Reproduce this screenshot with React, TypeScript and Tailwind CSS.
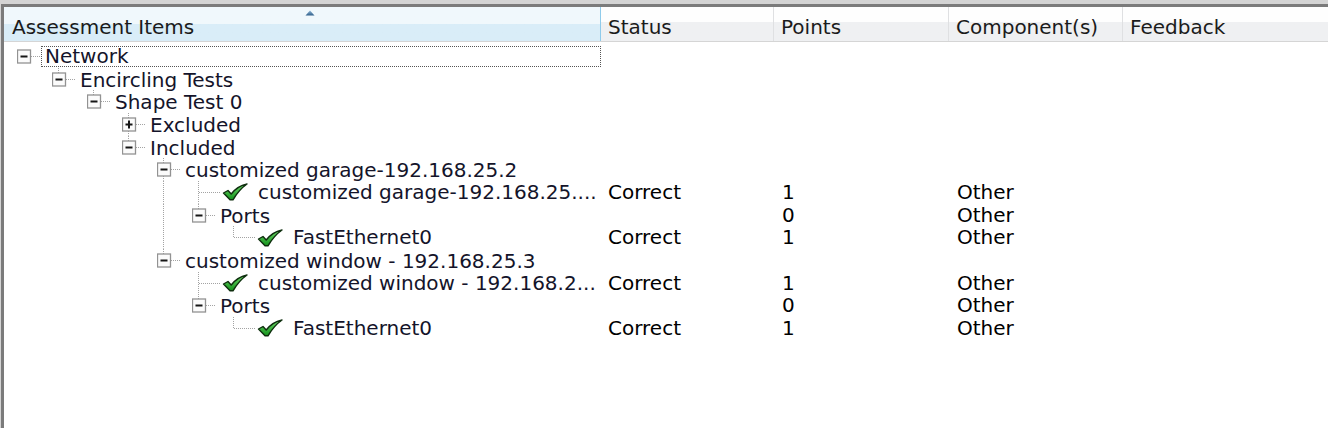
import React from 'react';

// Tree grid: "Assessment Items" results view
const ROW_H = 22.67;
const FONT = { fontFamily: '"DejaVu Sans", Verdana, sans-serif' };

type Row = {
  label: string;
  level: number;
  kind: 'open' | 'closed' | 'leaf';
  guides: boolean[];
  top: boolean;
  bottom: boolean;
  status?: string;
  points?: string;
  component?: string;
  focus?: boolean;
};

const f = false;
const t = true;

const rows: Row[] = [
  { label: 'Network', level: 0, kind: 'open', guides: [], top: f, bottom: f, focus: t },
  { label: 'Encircling Tests', level: 1, kind: 'open', guides: [f], top: t, bottom: f },
  { label: 'Shape Test 0', level: 2, kind: 'open', guides: [f, f], top: t, bottom: f },
  { label: 'Excluded', level: 3, kind: 'closed', guides: [f, f, f], top: t, bottom: t },
  { label: 'Included', level: 3, kind: 'open', guides: [f, f, f], top: t, bottom: f },
  { label: 'customized garage-192.168.25.2', level: 4, kind: 'open', guides: [f, f, f, f], top: t, bottom: t },
  { label: 'customized garage-192.168.25....', level: 5, kind: 'leaf', guides: [f, f, f, f, t], top: t, bottom: t, status: 'Correct', points: '1', component: 'Other' },
  { label: 'Ports', level: 5, kind: 'open', guides: [f, f, f, f, t], top: t, bottom: f, points: '0', component: 'Other' },
  { label: 'FastEthernet0', level: 6, kind: 'leaf', guides: [f, f, f, f, t, f], top: t, bottom: f, status: 'Correct', points: '1', component: 'Other' },
  { label: 'customized window - 192.168.25.3', level: 4, kind: 'open', guides: [f, f, f, f], top: t, bottom: f },
  { label: 'customized window - 192.168.2...', level: 5, kind: 'leaf', guides: [f, f, f, f, f], top: t, bottom: t, status: 'Correct', points: '1', component: 'Other' },
  { label: 'Ports', level: 5, kind: 'open', guides: [f, f, f, f, f], top: t, bottom: f, points: '0', component: 'Other' },
  { label: 'FastEthernet0', level: 6, kind: 'leaf', guides: [f, f, f, f, f, f], top: t, bottom: f, status: 'Correct', points: '1', component: 'Other' },
];

const DOT = { stroke: '#a3a3a3', strokeWidth: 1, strokeDasharray: '1 1' };
const MID = 11.5;

const Guide = ({ on }: { on: boolean }) => (
  <svg width="35" height={ROW_H} className="shrink-0">
    {on && <line x1="6.5" y1="0" x2="6.5" y2={ROW_H} {...DOT} />}
  </svg>
);

const Expander = ({ open, top, bottom }: { open: boolean; top: boolean; bottom: boolean }) => (
  <svg width="24" height={ROW_H} className="shrink-0">
    {top && <line x1="6.5" y1="0" x2="6.5" y2="5" {...DOT} />}
    {bottom && <line x1="6.5" y1="18" x2="6.5" y2={ROW_H} {...DOT} />}
    <line x1="14" y1={MID} x2="24" y2={MID} {...DOT} />
    <rect x="0.5" y="5" width="13" height="13" fill="#fbfbfb" stroke="#929292" strokeWidth="1.3" />
    <rect x="3.5" y="10.5" width="7" height="2" fill="#161616" />
    {!open && <rect x="6" y="7.5" width="2" height="8" fill="#161616" />}
  </svg>
);

const Connector = ({ bottom }: { bottom: boolean }) => (
  <svg width="30" height={ROW_H} className="shrink-0">
    <line x1="6.5" y1="0" x2="6.5" y2={bottom ? ROW_H : MID} {...DOT} />
    <line x1="7" y1={MID} x2="29" y2={MID} {...DOT} />
  </svg>
);

const Check = () => (
  <svg width="26" height="18" viewBox="0 0 26 18" className="shrink-0">
    <defs>
      <linearGradient id="chk" x1="0" y1="0" x2="0" y2="1">
        <stop offset="0" stopColor="#6fdc6a" />
        <stop offset="1" stopColor="#12901a" />
      </linearGradient>
    </defs>
    <path
      d="M1.5 10 L6 7.5 L9.2 11 C13 6 18 2.5 25 1 C20 4.5 15 10 11 16.8 L8 16.8 Z"
      fill="url(#chk)"
      stroke="#0e2e0e"
      strokeWidth="1.4"
      strokeLinejoin="round"
    />
  </svg>
);

const SortArrow = () => (
  <svg width="10" height="6" viewBox="0 0 10 6">
    <defs>
      <linearGradient id="arr" x1="0" y1="0" x2="0" y2="1">
        <stop offset="0" stopColor="#8fb6d6" />
        <stop offset="1" stopColor="#2f5f8a" />
      </linearGradient>
    </defs>
    <path d="M5 0.5 L9.5 5.5 L0.5 5.5 Z" fill="url(#arr)" />
  </svg>
);

const TreeRow = ({ row }: { row: Row }) => (
  <div className="flex text-[20px] text-[#14142a]" style={{ height: ROW_H, lineHeight: `${ROW_H}px` }}>
    <div className="flex w-[597px] shrink-0 pl-[13px]">
      {row.guides.map((g, i) => (
        <Guide key={i} on={g} />
      ))}
      {row.kind === 'leaf' ? (
        <>
          <Connector bottom={row.bottom} />
          <div className="flex items-center">
            <Check />
          </div>
          <span className="ml-[6px] pl-[4px] whitespace-nowrap overflow-hidden">{row.label}</span>
        </>
      ) : (
        <>
          <Expander open={row.kind === 'open'} top={row.top} bottom={row.bottom} />
          <span
            className={`pl-[3px] whitespace-nowrap border border-dotted ${
              row.focus ? 'flex-1 border-[#555] leading-[19px] my-[1px]' : 'border-transparent'
            }`}
          >
            {row.label}
          </span>
        </>
      )}
    </div>
    <div className="w-[173px] shrink-0 pl-[7px] text-black">{row.status}</div>
    <div className="w-[175px] shrink-0 pl-[8px] text-black">{row.points}</div>
    <div className="w-[174px] shrink-0 pl-[8px] text-black">{row.component}</div>
    <div className="flex-1" />
  </div>
);

export default function App() {
  return (
    <div className="w-[1328px] h-[428px] bg-[#d4d4d4] pt-[4px] pl-[1px] overflow-hidden" style={FONT}>
      <div className="h-full bg-white border-t-[3px] border-l-[3px] border-[#7b7b7b] flex flex-col">
        {/* header */}
        <div className="flex h-[35px] shrink-0 border-b border-[#d5d5d5] text-[20px] text-[#1b1b1b]">
          <div className="w-[597px] shrink-0 flex flex-col border-r border-[#8fcbeb] bg-gradient-to-b from-[#f0f8fc] from-50% to-[#d9edf8] to-50%">
            <div className="flex justify-center pl-[16px] pt-[3px] h-[9px]">
              <SortArrow />
            </div>
            <div className="pl-[8px] leading-[22px]">Assessment Items</div>
          </div>
          {[
            { label: 'Status', w: 'w-[173px]' },
            { label: 'Points', w: 'w-[175px]' },
            { label: 'Component(s)', w: 'w-[174px]' },
            { label: 'Feedback', w: 'flex-1' },
          ].map((c, i) => (
            <div
              key={c.label}
              className={`${c.w} shrink-0 pl-[7px] pt-[9px] leading-[22px] bg-gradient-to-b from-[#fefefe] from-45% to-[#eff0f2] to-45% ${
                i < 3 ? 'border-r border-[#dfe0e2]' : ''
              }`}
            >
              {c.label}
            </div>
          ))}
        </div>
        {/* body */}
        <div className="pt-[3px] flex flex-col">
          {rows.map((r, i) => (
            <TreeRow key={i} row={r} />
          ))}
        </div>
      </div>
    </div>
  );
}
